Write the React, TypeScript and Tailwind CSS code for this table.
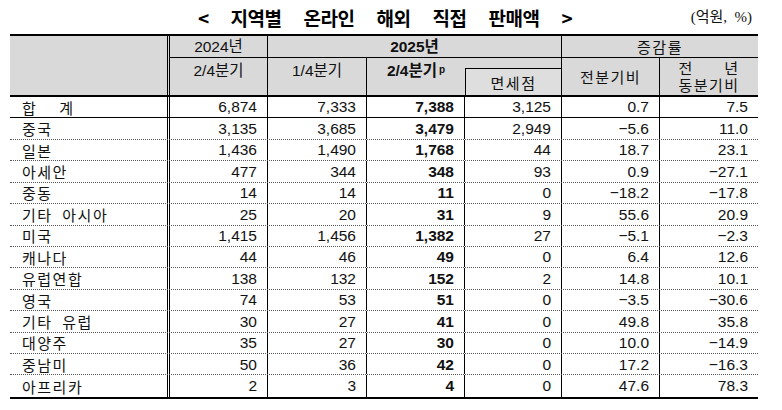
const rows: string[][] = [
  ['합 계', '6,874', '7,333', '7,388', '3,125', '0.7', '7.5'],
  ['중국', '3,135', '3,685', '3,479', '2,949', '−5.6', '11.0'],
  ['일본', '1,436', '1,490', '1,768', '44', '18.7', '23.1'],
  ['아세안', '477', '344', '348', '93', '0.9', '−27.1'],
  ['중동', '14', '14', '11', '0', '−18.2', '−17.8'],
  ['기타 아시아', '25', '20', '31', '9', '55.6', '20.9'],
  ['미국', '1,415', '1,456', '1,382', '27', '−5.1', '−2.3'],
  ['캐나다', '44', '46', '49', '0', '6.4', '12.6'],
  ['유럽연합', '138', '132', '152', '2', '14.8', '10.1'],
  ['영국', '74', '53', '51', '0', '−3.5', '−30.6'],
  ['기타 유럽', '30', '27', '41', '0', '49.8', '35.8'],
  ['대양주', '35', '27', '30', '0', '10.0', '−14.9'],
  ['중남미', '50', '36', '42', '0', '17.2', '−16.3'],
  ['아프리카', '2', '3', '4', '0', '47.6', '78.3'],
];

const cols = 'grid grid-cols-[160px_98px_99px_98px_97px_98px_98px]';
const kr = "font-['Noto_Sans_CJK_KR',sans-serif] text-[15px] tracking-[1.5px] leading-none";

const App = () => {
  return (
    <div className="h-[410px] w-[782px] bg-white font-['Liberation_Sans','Noto_Sans_CJK_KR',sans-serif] text-[#111]">
      <div className="ml-[10px] w-[748px]">
        {/* title */}
        <div className="grid h-[34px] grid-cols-[1fr_auto_1fr] items-center">
          <div />
          <div className="flex gap-[22px] pl-[2px] font-['Noto_Sans_CJK_KR',sans-serif] text-[19px] font-bold leading-none tracking-[-0.5px] text-black">
            <span>&lt;</span>
            <span>지역별</span>
            <span>온라인</span>
            <span>해외</span>
            <span>직접</span>
            <span>판매액</span>
            <span>&gt;</span>
          </div>
          <div className="flex justify-end pr-[6px] font-['Liberation_Serif','Noto_Sans_CJK_KR',serif] text-[15px] leading-none">
            (억원,&nbsp; %)
          </div>
        </div>

        {/* header */}
        <div
          className={`${cols} grid-rows-[22px_11px_26px] border-y-2 border-black bg-[#d9d9d9] text-[15.5px] leading-none`}
        >
          <div className="col-start-1 row-span-3 row-start-1 border-r-[3px] border-double border-black" />
          <div className="col-start-2 row-start-1 flex items-center justify-center border-r border-b border-black">
            2024년
          </div>
          <div className="col-span-3 col-start-3 row-start-1 flex items-center justify-center border-r border-b border-black font-bold">
            2025년
          </div>
          <div className={`col-span-2 col-start-6 row-start-1 flex items-center justify-center border-b border-black ${kr}`}>
            증감률
          </div>
          <div className="col-start-2 row-span-2 row-start-2 flex items-center justify-center border-r border-black pb-[12px]">
            2/4분기
          </div>
          <div className="col-start-3 row-span-2 row-start-2 flex items-center justify-center border-r border-black pb-[12px]">
            1/4분기
          </div>
          <div className="col-start-4 row-span-2 row-start-2 flex items-center justify-center pb-[12px] font-bold">
            2/4분기<sup className="relative -top-[1px] ml-[2px] text-[10px] font-bold">p</sup>
          </div>
          <div className="col-start-5 row-start-2 border-r border-b border-black" />
          <div className={`col-start-5 row-start-3 flex items-center justify-center border-x border-black bg-[#dedede] pt-[1px] ${kr}`}>
            면세점
          </div>
          <div className={`col-start-6 row-span-2 row-start-2 flex items-center justify-center border-r border-black ${kr}`}>
            전분기비
          </div>
          <div className="col-start-7 row-span-2 row-start-2 flex items-center justify-center pt-[1px] font-['Liberation_Sans','Noto_Sans_CJK_KR',sans-serif] text-[15px] tracking-[1.5px]">
            <div className="flex w-fit flex-col gap-[4px]">
              <div className="flex justify-between leading-[13px]">
                <span>전</span>
                <span>년</span>
              </div>
              <span className="leading-[13px]">동분기비</span>
            </div>
          </div>
        </div>

        {/* body */}
        <div className="border-b-2 border-black">
          {rows.map((row, i) => (
            <div
              key={row[0]}
              className={`${cols} h-[21.43px] ${
                i === 0
                  ? 'border-b border-black'
                  : i === rows.length - 1
                  ? ''
                  : 'border-b border-dotted border-[#555]'
              }`}
            >
              <div className={`flex items-center border-r-[3px] border-double border-black pl-[12px] ${kr}`}>
                {i === 0 ? (
                  <span className="flex gap-[22px]">
                    <span>합</span>
                    <span>계</span>
                  </span>
                ) : (
                  <span className="whitespace-pre">{row[0].replace(' ', '  ')}</span>
                )}
              </div>
              {row.slice(1).map((v, j) => (
                <div
                  key={j}
                  className={`flex items-center justify-end border-black pr-[10px] text-[15.5px] leading-none ${
                    j < 5 ? 'border-r' : ''
                  } ${j === 2 ? 'font-bold' : ''}`}
                >
                  {v}
                </div>
              ))}
            </div>
          ))}
        </div>
      </div>
    </div>
  );
};

export default App;
